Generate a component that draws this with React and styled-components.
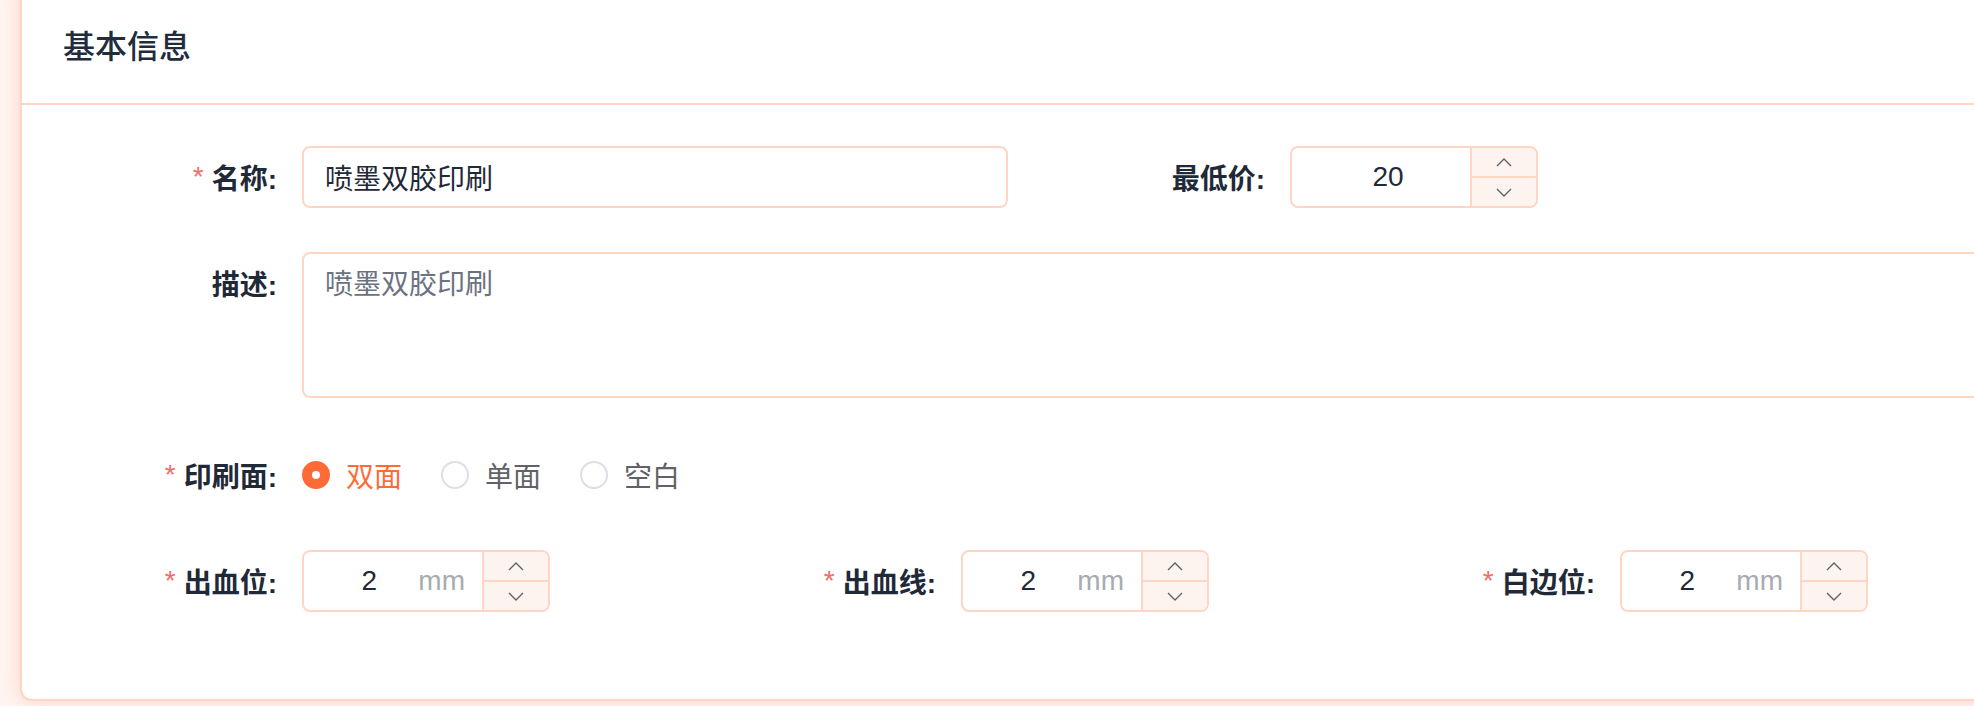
import React from 'react';
import styled, { createGlobalStyle } from 'styled-components';

const GlobalStyle = createGlobalStyle`
  html, body {
    margin: 0;
    background: #fff5f0;
  }
  body {
    overflow: hidden;
    font-family: "Liberation Sans", "Noto Sans CJK SC", sans-serif;
  }
`;

const Page = styled.div`
  padding: 0 0 40px 20px;
`;

const Card = styled.div`
  width: 2100px;
  margin-top: -18px;
  background: #ffffff;
  border: 2px solid #ffd5c4;
  border-radius: 12px;
  box-shadow: 0 0 20px rgba(255, 130, 90, 0.28);
`;

const CardHeader = styled.div`
  height: 119px;
  display: flex;
  align-items: center;
  padding-left: 41px;
  border-bottom: 2px solid #ffd5c4;
  font-size: 32px;
  font-weight: 500;
  color: #1f2d3d;
`;

const CardBody = styled.div`
  padding: 41px 0 43px 41px;
`;

const FormRow = styled.div`
  display: grid;
  grid-template-columns: ${(p) => p.$cols};
`;

const FormItem = styled.div`
  display: flex;
  align-items: ${(p) => (p.$top ? 'flex-start' : 'center')};
  min-height: 62px;
  margin-bottom: ${(p) => (p.$gap ? p.$gap : 44)}px;
`;

const Label = styled.label`
  flex: none;
  width: 239px;
  height: 62px;
  box-sizing: border-box;
  padding-right: 25px;
  display: flex;
  align-items: center;
  justify-content: flex-end;
  font-size: 28px;
  font-weight: 700;
  color: #1f2937;
`;

const Required = styled.span`
  color: #f56c6c;
  font-weight: 400;
  margin-right: 8px;
`;

const TextInput = styled.div`
  width: ${(p) => p.$width}px;
  height: 62px;
  box-sizing: border-box;
  border: 2px solid #ffd5c4;
  border-radius: 8px;
  padding: 0 21px;
  display: flex;
  align-items: center;
  font-size: 28px;
  color: #1f2937;
`;

const TextArea = styled.div`
  flex: 1;
  height: 146px;
  box-sizing: border-box;
  border: 2px solid #ffd5c4;
  border-radius: 8px;
  padding: 10px 21px;
  font-size: 28px;
  line-height: 42px;
  color: #6b7280;
`;

const NumberBox = styled.div`
  width: 248px;
  height: 62px;
  box-sizing: border-box;
  border: 2px solid #ffd5c4;
  border-radius: 8px;
  display: flex;
  overflow: hidden;
`;

const NumberValue = styled.div`
  flex: 1;
  display: flex;
  align-items: center;
  justify-content: center;
  padding-left: ${(p) => p.$padLeft}px;
  font-size: 28px;
  color: #1f2937;
`;

const Suffix = styled.span`
  display: flex;
  align-items: center;
  padding-right: 17px;
  font-size: 28px;
  color: #a8abb2;
`;

const Steps = styled.div`
  flex: none;
  width: 64px;
  display: flex;
  flex-direction: column;
  border-left: 2px solid #ffd5c4;
  background: #fdf4f0;
`;

const StepButton = styled.div`
  flex: 1;
  display: flex;
  align-items: center;
  justify-content: center;
  & + & {
    border-top: 2px solid #ffd5c4;
  }
`;

const RadioGroup = styled.div`
  display: flex;
  align-items: center;
  gap: 39px;
`;

const RadioItem = styled.div`
  display: flex;
  align-items: center;
  gap: 16px;
  font-size: 28px;
  color: ${(p) => (p.$checked ? '#ff6b35' : '#606266')};
`;

const RadioCircle = styled.span`
  width: 28px;
  height: 28px;
  box-sizing: border-box;
  border-radius: 50%;
  border: 2px solid ${(p) => (p.$checked ? '#ff6b35' : '#dcdfe6')};
  background: ${(p) => (p.$checked ? '#ff6b35' : '#ffffff')};
  display: flex;
  align-items: center;
  justify-content: center;

  &::after {
    content: '';
    width: 8px;
    height: 8px;
    border-radius: 50%;
    background: #ffffff;
    display: ${(p) => (p.$checked ? 'block' : 'none')};
  }
`;

function Chevron({ up }) {
  return (
    <svg width="16" height="9" viewBox="0 0 16 9" fill="none">
      <path
        d={up ? 'M1 8 L8 1 L15 8' : 'M1 1 L8 8 L15 1'}
        stroke="#606266"
        strokeWidth="1.4"
      />
    </svg>
  );
}

function NumberInput({ value, suffix, padLeft = 0 }) {
  return (
    <NumberBox>
      <NumberValue $padLeft={padLeft}>{value}</NumberValue>
      {suffix && <Suffix>{suffix}</Suffix>}
      <Steps>
        <StepButton>
          <Chevron up />
        </StepButton>
        <StepButton>
          <Chevron />
        </StepButton>
      </Steps>
    </NumberBox>
  );
}

const sides = [
  { name: '双面', checked: true },
  { name: '单面' },
  { name: '空白' }
];

const margins = ['出血位', '出血线', '白边位'];

function App() {
  return (
    <Page>
      <GlobalStyle />
      <Card>
        <CardHeader>基本信息</CardHeader>
        <CardBody>
          <FormRow $cols="988px 988px">
            <FormItem>
              <Label>
                <Required>*</Required>名称:
              </Label>
              <TextInput $width={706}>喷墨双胶印刷</TextInput>
            </FormItem>
            <FormItem>
              <Label>最低价:</Label>
              <NumberInput value="20" padLeft={14} />
            </FormItem>
          </FormRow>
          <FormRow $cols="1976px">
            <FormItem $top $gap={46}>
              <Label>描述:</Label>
              <TextArea>喷墨双胶印刷</TextArea>
            </FormItem>
          </FormRow>
          <FormRow $cols="1976px">
            <FormItem>
              <Label>
                <Required>*</Required>印刷面:
              </Label>
              <RadioGroup>
                {sides.map((item) => (
                  <RadioItem key={item.name} $checked={item.checked}>
                    <RadioCircle $checked={item.checked} />
                    {item.name}
                  </RadioItem>
                ))}
              </RadioGroup>
            </FormItem>
          </FormRow>
          <FormRow $cols="659px 659px 659px">
            {margins.map((name) => (
              <FormItem key={name}>
                <Label>
                  <Required>*</Required>
                  {name}:
                </Label>
                <NumberInput value="2" suffix="mm" padLeft={16} />
              </FormItem>
            ))}
          </FormRow>
        </CardBody>
      </Card>
    </Page>
  );
}

export default App;
